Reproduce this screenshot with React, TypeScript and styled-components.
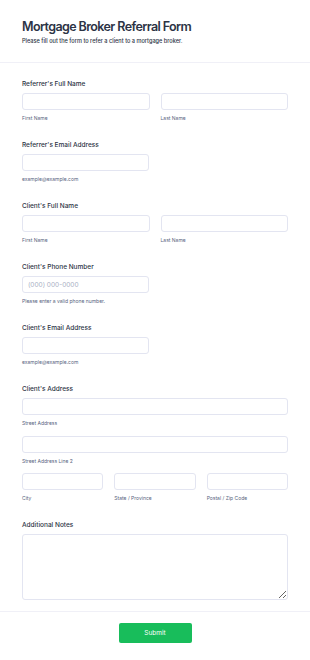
import React from 'react'
import styled, { createGlobalStyle } from 'styled-components'

const GlobalStyle = createGlobalStyle`
  html, body {
    margin: 0;
    padding: 0;
    background: #ffffff;
  }
  body {
    font-family: Inter, "Noto Sans", Arial, sans-serif;
    color: #2c3345;
  }
  * {
    box-sizing: border-box;
  }
`

const Page = styled.div`
  width: 310px;
  background: #ffffff;
`

const Header = styled.header`
  padding: 18px 22px 16px;
  border-bottom: 1px solid #f0f0f7;
`

const Title = styled.h1`
  margin: 0;
  font-size: 12.5px;
  line-height: 18px;
  font-weight: 600;
  letter-spacing: -0.6px;
  color: #2c3345;
`

const Subtitle = styled.p`
  margin: 0;
  font-size: 5.6px;
  line-height: 10px;
  font-weight: 500;
  color: #2c3345;
`

const FieldList = styled.ul`
  list-style: none;
  margin: 0;
  padding: 16px 22px 11px;
  display: flex;
  flex-direction: column;
  gap: 18px;
`

const Field = styled.li`
  display: flex;
  flex-direction: column;
`

const Label = styled.label`
  font-size: 6.5px;
  line-height: 10px;
  font-weight: 500;
  color: #2c3345;
  margin-bottom: 4px;
`

const Row = styled.div<{ cols?: number; half?: boolean }>`
  display: grid;
  grid-template-columns: repeat(${p => p.cols || 1}, 1fr);
  column-gap: 11px;
  width: ${p => (p.half ? '127px' : '100%')};
`

const Stack = styled.div`
  display: flex;
  flex-direction: column;
  gap: 8.5px;
`

const Cell = styled.div`
  display: flex;
  flex-direction: column;
`

const Input = styled.input`
  height: 17px;
  width: 100%;
  border: 1px solid #e3e5f1;
  border-radius: 3px;
  padding: 0 5px;
  font-family: inherit;
  font-size: 6.5px;
  color: #2c3345;
  background: #fff;
  outline: none;
  &::placeholder {
    color: #a9afc4;
  }
`

const TextArea = styled.textarea`
  height: 66px;
  width: 100%;
  border: 1px solid #e3e5f1;
  border-radius: 3px;
  font-family: inherit;
  resize: vertical;
  background: #fff;
  outline: none;
  display: block;
`

const Sub = styled.span`
  font-size: 5px;
  line-height: 8px;
  color: #57647e;
  margin-top: 4px;
`

const Footer = styled.div`
  border-top: 1px solid #f0f0f7;
  display: flex;
  justify-content: center;
  padding: 11px 0 16px;
`

const Submit = styled.button`
  width: 73px;
  height: 20px;
  background: #18bd5b;
  border: none;
  border-radius: 2px;
  color: #ffffff;
  font-family: inherit;
  font-size: 6.5px;
  font-weight: 400;
  cursor: pointer;
`

type CellProps = { name: string; placeholder?: string }

const InputCell = ({ name, placeholder }: CellProps) => (
  <Cell>
    <Input placeholder={placeholder} />
    <Sub>{name}</Sub>
  </Cell>
)

const App = () => (
  <Page>
    <GlobalStyle />
    <Header>
      <Title>Mortgage Broker Referral Form</Title>
      <Subtitle>Please fill out the form to refer a client to a mortgage broker.</Subtitle>
    </Header>
    <FieldList>
      <Field>
        <Label>Referrer's Full Name</Label>
        <Row cols={2}>
          <InputCell name="First Name" />
          <InputCell name="Last Name" />
        </Row>
      </Field>
      <Field>
        <Label>Referrer's Email Address</Label>
        <Row half>
          <InputCell name="example@example.com" />
        </Row>
      </Field>
      <Field>
        <Label>Client's Full Name</Label>
        <Row cols={2}>
          <InputCell name="First Name" />
          <InputCell name="Last Name" />
        </Row>
      </Field>
      <Field>
        <Label>Client's Phone Number</Label>
        <Row half>
          <InputCell name="Please enter a valid phone number." placeholder="(000) 000-0000" />
        </Row>
      </Field>
      <Field>
        <Label>Client's Email Address</Label>
        <Row half>
          <InputCell name="example@example.com" />
        </Row>
      </Field>
      <Field>
        <Label>Client's Address</Label>
        <Stack>
          <Row>
            <InputCell name="Street Address" />
          </Row>
          <Row>
            <InputCell name="Street Address Line 2" />
          </Row>
          <Row cols={3}>
            <InputCell name="City" />
            <InputCell name="State / Province" />
            <InputCell name="Postal / Zip Code" />
          </Row>
        </Stack>
      </Field>
      <Field>
        <Label>Additional Notes</Label>
        <TextArea />
      </Field>
    </FieldList>
    <Footer>
      <Submit type="button">Submit</Submit>
    </Footer>
  </Page>
)

export default App
